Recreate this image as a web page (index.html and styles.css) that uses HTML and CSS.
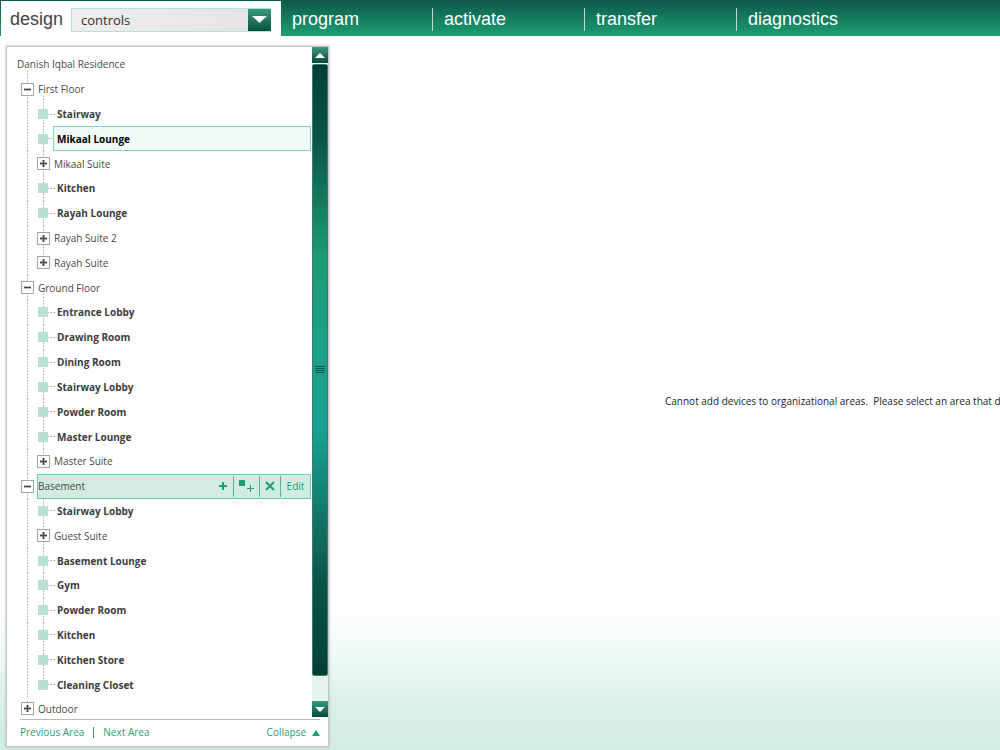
FILE: index.html
```html
<!DOCTYPE html>
<html lang="en">
<head>
<meta charset="utf-8">
<title>Design - controls</title>
<link rel="stylesheet" href="styles.css">
</head>
<body>
<header class="topbar">
  <div class="design-tab">
    <label class="design-label" for="view">design</label>
    <div class="picker">
      <select class="picker-select" id="view"><option>controls</option></select>
      <span class="picker-arrow"><svg width="15" height="7" viewBox="0 0 15 7"><path d="M0 0h15L7.500 7z" fill="#fff"/></svg></span>
    </div>
  </div>
  <nav class="tabs">
    <a class="tab" href="#">program</a>
    <a class="tab" href="#">activate</a>
    <a class="tab" href="#">transfer</a>
    <a class="tab" href="#">diagnostics</a>
  </nav>
</header>
<div class="workspace">
  <aside class="panel">
    <div class="panel-body">
      <ul class="tree" id="tree"></ul>
      <div class="scrollbar">
        <button class="scroll-btn" aria-label="Scroll up"><svg width="10" height="5" viewBox="0 0 10 5"><path d="M0 5h10L5 0z" fill="#fff"/></svg></button>
        <div class="scroll-track"><div class="scroll-thumb"><span class="grip"></span></div></div>
        <button class="scroll-btn" aria-label="Scroll down"><svg width="10" height="5" viewBox="0 0 10 5"><path d="M0 0h10L5 5z" fill="#fff"/></svg></button>
      </div>
    </div>
    <footer class="panel-footer">
      <a class="foot-link" href="#">Previous Area</a>
      <span class="foot-sep"></span>
      <a class="foot-link" href="#">Next Area</a>
      <button class="collapse">Collapse <svg width="8" height="8" viewBox="0 0 8 8"><path d="M0 8h8L4 2z" fill="#1f9e74"/></svg></button>
    </footer>
  </aside>
  <main class="content">
    <p class="message">Cannot add devices to organizational areas.&nbsp; Please select an area that does not contain other areas.</p>
  </main>
</div>
<template id="area-tools">
  <span class="tools">
    <button class="tool" aria-label="Add area"><svg width="10" height="10" viewBox="0 0 10 10"><path d="M5 1v8M1 5h8" stroke="#1f9e74" stroke-width="2"/></svg></button>
    <button class="tool tool-wide" aria-label="Add sub-area"><svg width="16" height="12" viewBox="0 0 16 12"><path d="M0 0h6v6H0z" fill="#1f9e74"/><path d="M11.500 5v7M8 8.500h7" stroke="#1f9e74"/></svg></button>
    <button class="tool" aria-label="Delete"><svg width="10" height="10" viewBox="0 0 10 10"><path d="M1 1l8 8M9 1l-8 8" stroke="#1f9e74" stroke-width="2"/></svg></button>
    <button class="tool tool-edit">Edit</button>
  </span>
</template>
<script src="tree.js"></script>
</body>
</html>
```
FILE: tree.js
```js
// "+" marks a closed group; a leading "*" marks the selected room.
const areas = [
  ["First Floor", ["Stairway", "*Mikaal Lounge", "+Mikaal Suite", "Kitchen", "Rayah Lounge", "+Rayah Suite 2", "+Rayah Suite"]],
  ["Ground Floor", ["Entrance Lobby", "Drawing Room", "Dining Room", "Stairway Lobby", "Powder Room", "Master Lounge", "+Master Suite"]],
  ["Basement", ["Stairway Lobby", "+Guest Suite", "Basement Lounge", "Gym", "Powder Room", "Kitchen", "Kitchen Store", "Cleaning Closet"]],
  ["Outdoor", []]
];
const tree = document.getElementById("tree");

function el(tag, cls, text) {
  const node = document.createElement(tag);
  node.className = cls;
  if (text) node.textContent = text;
  return node;
}
function toggle(open, name) {
  const b = el("button", open ? "toggle toggle-open" : "toggle");
  b.setAttribute("aria-label", (open ? "Collapse " : "Expand ") + name);
  return b;
}
function row(cls, parts) {
  const li = el("li", "row " + cls);
  li.append(...parts);
  tree.append(li);
}

row("row-root", [el("span", "root-label", "Danish Iqbal Residence")]);
areas.forEach(([name, children]) => {
  const open = children.length > 0;
  const rail = el("span", open ? "rail" : "rail rail-end");
  rail.append(toggle(open, name));
  const label = el("span", open ? "label label-open" : "label", name);
  if (name === "Basement") {
    label.classList.add("label-hover");
    label.append(document.getElementById("area-tools").content.cloneNode(true));
  }
  row(open ? "row-floor" : "row-floor row-last", [rail, label]);
  children.forEach((child, i) => {
    const group = child[0] === "+";
    const selected = child[0] === "*";
    const title = child.replace(/^[+*]/, "");
    const inner = el("span", i === children.length - 1 ? "rail rail-end" : "rail");
    inner.append(group ? toggle(false, title) : el("span", "marker"));
    const text = el("span", "label" + (group ? "" : " label-room") + (selected ? " label-selected" : ""), title);
    row(group ? "" : "row-room", [el("span", "rail"), inner, text]);
  });
});
```
FILE: styles.css
```css
* { box-sizing: border-box; }
body {
  margin: 0;
  height: 100vh;
  display: flex;
  flex-direction: column;
  overflow: hidden;
  font-family: "Open Sans", "Noto Sans", sans-serif;
  font-size: 10px;
  color: #484848;
  background: linear-gradient(#fff 81%, #edf8f3 88%, #daf0e7 94%, #d0ede1);
}
button {
  font: inherit;
  color: inherit;
  border: 0;
  padding: 0;
  background: none;
}
a { text-decoration: none; }

.topbar {
  display: flex;
  height: 36px;
  flex: none;
  font-family: "Liberation Sans", Arial, sans-serif;
  font-size: 18px;
  background: linear-gradient(#0d584a, #1e9f73);
}
.design-tab {
  display: flex;
  align-items: center;
  gap: 8px;
  width: 280px;
  margin: 1px 0 0 1px;
  padding: 2px 10px 0 9px;
  background: #fff;
  color: #444;
}
.picker {
  display: grid;
  flex: 1;
  height: 24px;
}
.picker-select {
  grid-area: 1 / 1;
  appearance: none;
  border: 1px solid #b4e3d4;
  border-radius: 0;
  padding: 0 30px 0 9px;
  font: 13px "Open Sans", "Noto Sans", sans-serif;
  color: #333;
  background: linear-gradient(90deg, #eee, #e3e3e3);
}
.picker-arrow {
  grid-area: 1 / 1;
  justify-self: end;
  display: grid;
  place-items: center;
  width: 23px;
  margin: 1px 0;
  pointer-events: none;
  background: linear-gradient(#3a9b7c, #07513c);
}
.tabs {
  display: flex;
  padding: 8px 0 5px;
}
.tab {
  width: 152px;
  padding-left: 11px;
  border-left: 1px solid #b9dccf;
  line-height: 22px;
  color: #fff;
}
.tab:first-child {
  width: 151px;
  padding-left: 10px;
  border-color: transparent;
}

.workspace {
  flex: 1;
  min-height: 0;
  display: flex;
}
.panel {
  display: flex;
  flex-direction: column;
  flex: none;
  width: 323px;
  margin: 10px 0 3px 6px;
  border: 1px solid #c4c4c4;
  background: #fff;
  box-shadow: 0 0 3px #bbb;
}
.panel-body {
  flex: 1;
  min-height: 0;
  display: flex;
}
.tree {
  --dots-y: repeating-linear-gradient(#aaa 0 1px, #e4e4e4 1px 3px);
  --dots-x: repeating-linear-gradient(90deg, #aaa 0 1px, #e8e8e8 1px 3px);
  flex: 1;
  display: grid;
  grid-template-rows: repeat(26, 1fr) 20px;
  margin: 0;
  padding: 5px 1px 0 12px;
  list-style: none;
}
.row {
  display: flex;
  align-items: center;
  min-height: 0;
}
.row-root { background: var(--dots-y) 8px 100% / 1px 6px no-repeat; }
.row-room { background: var(--dots-x) 29px 50% / 8px 1px no-repeat; }
.row-last { padding-top: 4px; }
.root-label { margin-left: -2px; }
.rail {
  flex: none;
  align-self: stretch;
  width: 16px;
  display: flex;
  align-items: center;
  justify-content: center;
  background: var(--dots-y) 8px 0 / 1px 100% no-repeat;
}
.rail-end { background-size: 1px 50%; }
.marker {
  width: 10px;
  height: 10px;
  background: #b9e2d3;
}
.toggle {
  width: 13px;
  height: 13px;
  border: 1px solid #a5a5a5;
  background:
    linear-gradient(#444, #444) center / 7px 1px no-repeat,
    linear-gradient(#444, #444) center / 1px 7px no-repeat,
    linear-gradient(#aaa, #aaa) center / 7px 3px no-repeat,
    linear-gradient(#aaa, #aaa) center / 3px 7px no-repeat,
    #fff;
}
.toggle-open {
  background:
    linear-gradient(#444, #444) center / 7px 1px no-repeat,
    linear-gradient(#bbb, #bbb) center / 7px 3px no-repeat,
    #fff;
}
.label {
  flex: 1;
  display: flex;
  align-items: center;
  align-self: stretch;
  margin-left: 2px;
  border: 1px solid transparent;
}
.label-open { background: var(--dots-y) 5px 100% / 1px 5px no-repeat; }
.label-room {
  padding-left: 3px;
  font-weight: bold;
  color: #3c3c3c;
}
.label-selected {
  border-color: #80d8b8;
  background: #f1fcf9;
  color: #000;
}
.label-hover {
  border-color: #69cbbd;
  background: #d2ebe1;
}
.tools {
  margin-left: auto;
  align-self: stretch;
  display: flex;
  padding: 1px 0;
  color: #1f9e74;
}
.tool {
  display: grid;
  place-items: center;
  width: 21px;
  border-right: 1px solid #4fb596;
}
.tool-wide { width: 26px; }
.tool-edit { width: 29px; border: 0; }

.scrollbar {
  flex: none;
  width: 16px;
  display: flex;
  flex-direction: column;
}
.scroll-btn {
  height: 16px;
  display: grid;
  place-items: center;
  background: linear-gradient(#3a9b7c, #06483a);
}
.scroll-track {
  flex: 1;
  padding-top: 1px;
  background: #e6f4ef;
}
.scroll-thumb {
  height: 96%;
  display: grid;
  place-items: center;
  border: 1px solid #3e7a6c;
  border-radius: 2px;
  background: linear-gradient(#053f35, #0a5446 12%, #1d9d74 32%, #1ea087 45%, #1aa096 60%, #0a5446 85%, #053f35);
}
.grip {
  width: 10px;
  height: 7px;
  background: repeating-linear-gradient(#0b5c50 0 1px, transparent 1px 2px);
}

.panel-footer {
  display: flex;
  align-items: center;
  height: 27px;
  margin: 2px 8px 0 13px;
  padding-bottom: 2px;
  border-top: 1px solid #bbb;
  color: #1f9e74;
}
.foot-link { color: inherit; }
.foot-sep {
  width: 1px;
  height: 11px;
  margin: 0 9px;
  background: #1f9e74;
}
.collapse {
  margin-left: auto;
  display: flex;
  align-items: center;
  gap: 6px;
}

.content {
  flex: 1;
  min-width: 0;
  overflow: hidden;
  display: flex;
  align-items: center;
  padding: 16px 0 0 336px;
}
.message {
  margin: 0;
  white-space: nowrap;
  color: #222;
}
```
